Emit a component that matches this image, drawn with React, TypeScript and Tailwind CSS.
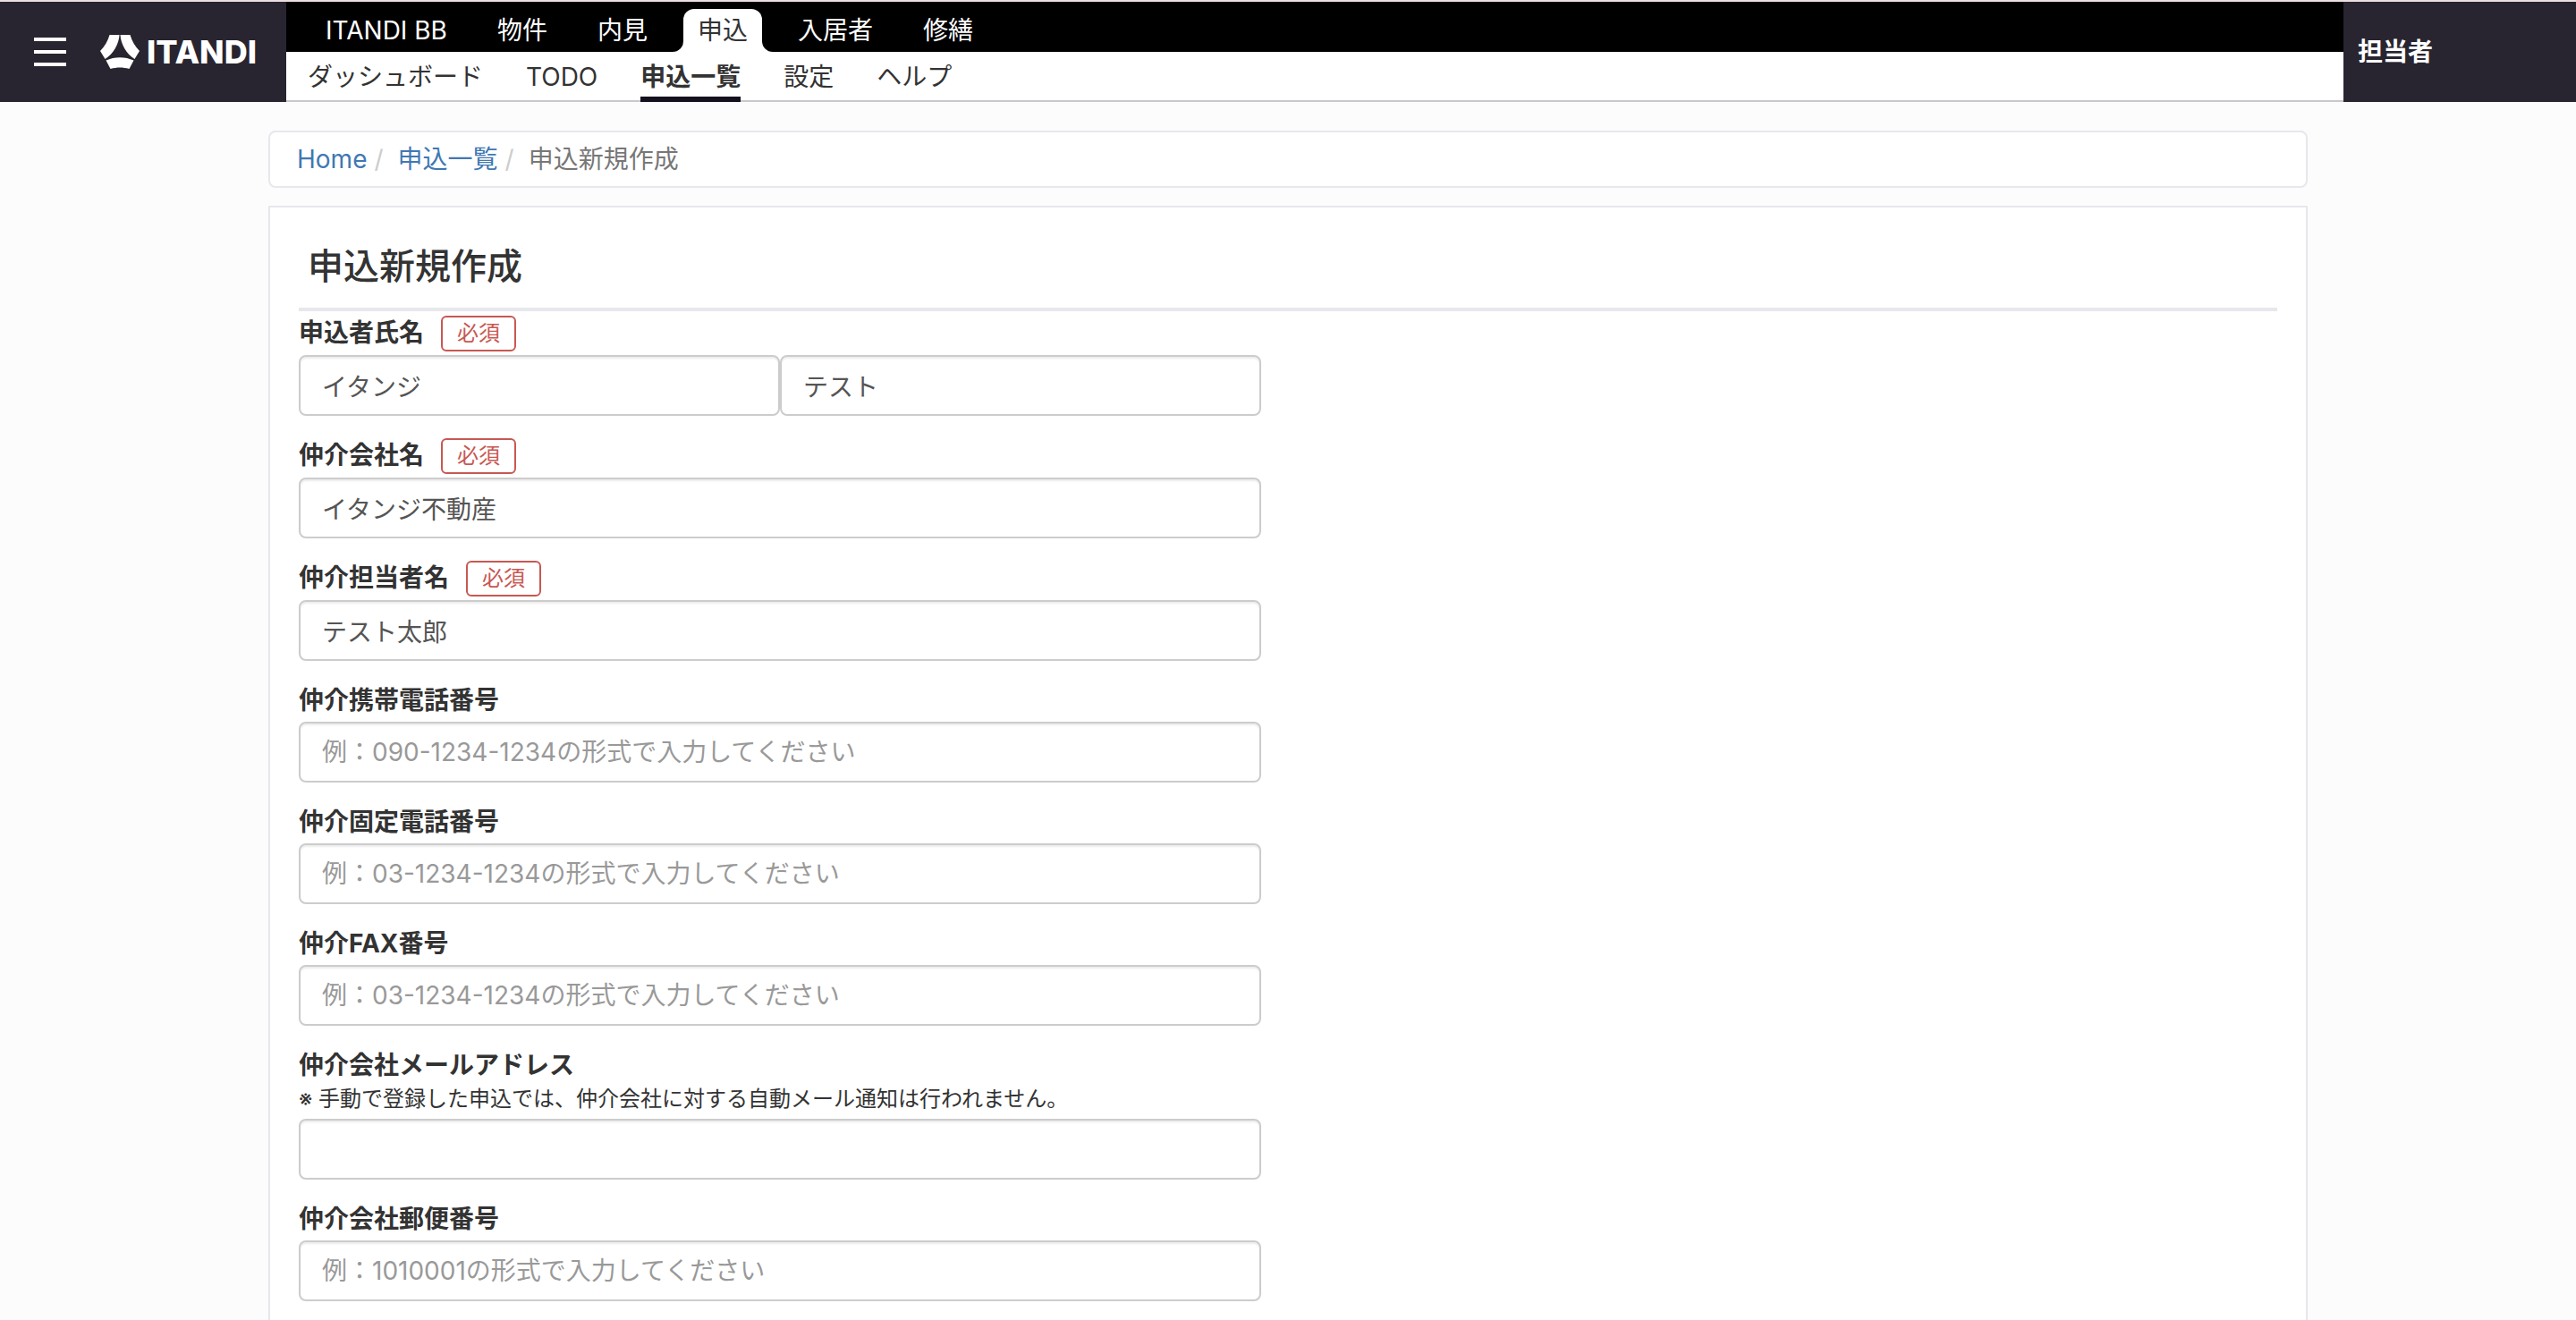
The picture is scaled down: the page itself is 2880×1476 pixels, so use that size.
import { clsx } from 'clsx';

interface NavItem {
  label: string;
  active?: boolean;
}

interface Field {
  id: string;
  label: string;
  required?: boolean;
  note?: string;
  inputs: { value?: string; placeholder?: string }[];
}

const mainNav: NavItem[] = [
  { label: 'ITANDI BB' },
  { label: '物件' },
  { label: '内見' },
  { label: '申込', active: true },
  { label: '入居者' },
  { label: '修繕' },
];

const subNav: NavItem[] = [
  { label: 'ダッシュボード' },
  { label: 'TODO' },
  { label: '申込一覧', active: true },
  { label: '設定' },
  { label: 'ヘルプ' },
];

const fields: Field[] = [
  {
    id: 'applicant-name',
    label: '申込者氏名',
    required: true,
    inputs: [{ value: 'イタンジ' }, { value: 'テスト' }],
  },
  { id: 'agency-name', label: '仲介会社名', required: true, inputs: [{ value: 'イタンジ不動産' }] },
  { id: 'agent-name', label: '仲介担当者名', required: true, inputs: [{ value: 'テスト太郎' }] },
  {
    id: 'agent-mobile',
    label: '仲介携帯電話番号',
    inputs: [{ placeholder: '例：090-1234-1234の形式で入力してください' }],
  },
  {
    id: 'agent-phone',
    label: '仲介固定電話番号',
    inputs: [{ placeholder: '例：03-1234-1234の形式で入力してください' }],
  },
  {
    id: 'agent-fax',
    label: '仲介FAX番号',
    inputs: [{ placeholder: '例：03-1234-1234の形式で入力してください' }],
  },
  {
    id: 'agency-mail',
    label: '仲介会社メールアドレス',
    note: '※ 手動で登録した申込では、仲介会社に対する自動メール通知は行われません。',
    inputs: [{}],
  },
  {
    id: 'agency-zip',
    label: '仲介会社郵便番号',
    inputs: [{ placeholder: '例：1010001の形式で入力してください' }],
  },
];

function Logo() {
  return (
    <a href="#" className="flex items-center gap-2 text-white">
      <svg viewBox="0 0 44 38" className="h-[38px] w-[44px]" fill="currentColor" aria-hidden="true">
        <path d="M10.5 0H21.5C21 10 15 21 5.5 27L0 18C5 13 8.5 7 10.5 0Z" />
        <path d="M33.5 0H22.5C23 10 29 21 38.5 27L44 18C39 13 35.5 7 33.5 0Z" />
        <path d="M6.5 28.5C16 24 28 24 37.5 28.5L32.5 38C25 36 19 36 11.5 38Z" />
      </svg>
      <span className="text-[36px] leading-none font-extrabold">ITANDI</span>
    </a>
  );
}

function Header() {
  return (
    <header className="flex h-[114px] border-t-2 border-[#ecdfe1] text-[28px] text-[#333333]">
      <div className="flex w-80 shrink-0 items-center bg-[#282530] pl-[38px]">
        <button type="button" aria-label="メニュー" className="mr-[38px] flex flex-col gap-[10px]">
          <span className="h-1 w-9 bg-white" />
          <span className="h-1 w-9 bg-white" />
          <span className="h-1 w-9 bg-white" />
        </button>
        <Logo />
      </div>

      <div className="min-w-0 flex-1 bg-white">
        <nav className="flex h-14 items-end gap-6 bg-black pl-7">
          {mainNav.map((item) => (
            <a
              key={item.label}
              href="#"
              className={clsx(
                'relative flex h-12 items-center px-4',
                item.active ? 'rounded-t-xl bg-white' : 'text-white',
              )}
            >
              {item.label}
              {/* タブの裾の丸み */}
              {item.active && (
                <>
                  <span className="absolute bottom-0 -left-3 size-3 bg-white">
                    <span className="block size-3 rounded-br-xl bg-black" />
                  </span>
                  <span className="absolute -right-3 bottom-0 size-3 bg-white">
                    <span className="block size-3 rounded-bl-xl bg-black" />
                  </span>
                </>
              )}
            </a>
          ))}
        </nav>
        <nav className="flex h-14 gap-12 pl-6 shadow-[inset_0_-2px_0_#c8c7cc]">
          {subNav.map((item) => (
            <a
              key={item.label}
              href="#"
              className={clsx(
                'flex items-center border-y-[6px]',
                item.active ? 'border-t-transparent border-b-[#14101e] font-bold' : 'border-transparent',
              )}
            >
              {item.label}
            </a>
          ))}
        </nav>
      </div>

      <div className="flex w-[260px] shrink-0 items-center bg-[#282530] pl-4 font-bold text-white">
        担当者
      </div>
    </header>
  );
}

function Breadcrumb() {
  return (
    <nav className="rounded-lg border-2 border-[#e7e8ec] bg-white px-[30px]">
      <ol className="flex text-[28px] leading-[60px]">
        <li>
          <a href="#" className="text-[#4078b3]">Home</a>
        </li>
        <li>
          <span className="pr-4 pl-2 text-[#cccccc]">/</span>
          <a href="#" className="text-[#4078b3]">申込一覧</a>
        </li>
        <li className="text-[#777777]">
          <span className="pr-4 pl-2 text-[#cccccc]">/</span>
          申込新規作成
        </li>
      </ol>
    </nav>
  );
}

function FormField({ field }: { field: Field }) {
  return (
    <div>
      <div className="mb-1">
        <div className="flex items-start gap-[19px]">
          <label htmlFor={field.id} className="text-[28px] leading-10 font-bold">
            {field.label}
          </label>
          {field.required && (
            <span className="mt-px rounded-md border-2 border-[#c85852] px-4 text-2xl leading-9 text-[#c85852]">
              必須
            </span>
          )}
        </div>
        {field.note && <p className="text-2xl leading-9">{field.note}</p>}
      </div>
      <div className="flex">
        {field.inputs.map((input, i) => (
          <input
            key={i}
            id={i === 0 ? field.id : `${field.id}-${i}`}
            aria-label={i === 0 ? undefined : field.label}
            type="text"
            defaultValue={input.value}
            placeholder={input.placeholder}
            className="h-[68px] min-w-0 flex-1 rounded-lg border-2 border-[#cccccc] bg-white px-6 text-[28px] text-[#555555] shadow-[inset_0_2px_2px_rgba(0,0,0,0.075)] placeholder:text-[#999999]"
          />
        ))}
      </div>
    </div>
  );
}

export default function App() {
  return (
    <div
      lang="ja"
      className="flex min-h-screen flex-col bg-[#fcfcfc] font-['Inter','Noto_Sans_CJK_JP',sans-serif] text-[#333333]"
    >
      <Header />
      <main className="flex w-full max-w-[2280px] flex-1 flex-col gap-5 self-center pt-8">
        <Breadcrumb />
        <section className="flex-1 border-2 border-b-0 border-[#e7e8ec] bg-white px-8 pt-5 pb-5">
          <h1 className="border-b-4 border-[#e7e8ec] px-[10px] text-[40px] leading-[92px] font-medium">
            申込新規作成
          </h1>
          <form className="grid grid-cols-2 gap-[60px] pt-1">
            <div className="flex flex-col gap-6">
              {fields.map((field) => (
                <FormField key={field.id} field={field} />
              ))}
            </div>
          </form>
        </section>
      </main>
    </div>
  );
}
